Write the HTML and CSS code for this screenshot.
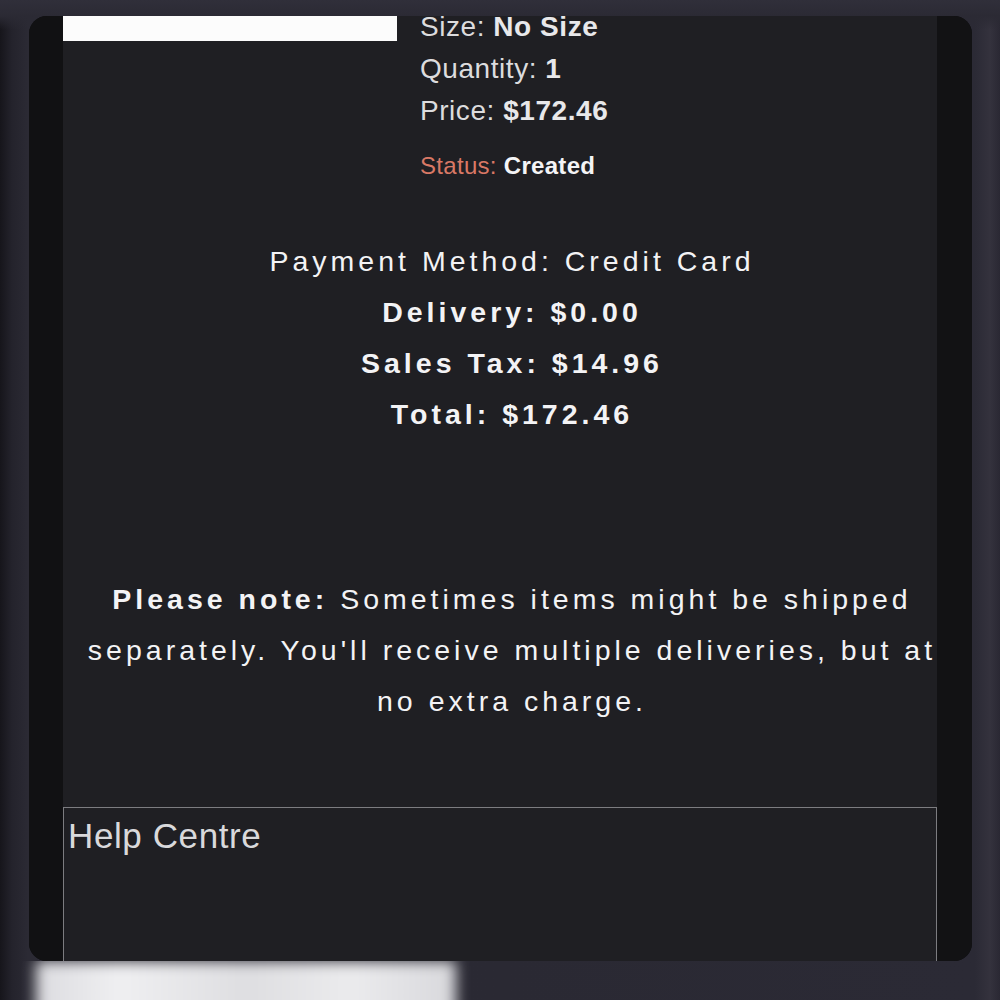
FILE: index.html
```html
<!DOCTYPE html>
<html>
<head>
<meta charset="utf-8">
<link rel="stylesheet" href="styles.css">
</head>
<body>
<div class="frame">
  <div class="card">
    <div class="strip"></div>
    <div class="panel">
      <div class="product">
        <div class="thumb"></div>
        <div class="details">
          <div class="line">Size: <b>No Size</b></div>
          <div class="line">Quantity: <b>1</b></div>
          <div class="line">Price: <b>$172.46</b></div>
          <div class="status"><span class="status-label">Status:</span> <b>Created</b></div>
        </div>
      </div>
      <div class="summary">
        <div>Payment Method: Credit Card</div>
        <div class="strong">Delivery: $0.00</div>
        <div class="strong">Sales Tax: $14.96</div>
        <div class="strong">Total: $172.46</div>
      </div>
      <p class="note"><b>Please note:</b> Sometimes items might be shipped separately. You'll receive multiple deliveries, but at no extra charge.</p>
      <div class="help">Help Centre</div>
    </div>
    <div class="strip strip-right"></div>
  </div>
  <div class="bottom">
    <div class="glow"></div>
  </div>
</div>
</body>
</html>
```
FILE: styles.css
```css
html, body {
  margin: 0;
  padding: 0;
}
body {
  width: 1000px;
  height: 1000px;
  overflow: hidden;
  background: linear-gradient(90deg, #16151b 0px, #24232c 12px, #2b2a34 28px, #2a2933 500px, #2b2a35 975px, #34323d 990px, #2a2833 1000px);
  font-family: "Liberation Sans", Arial, sans-serif;
}
.frame {
  display: flex;
  flex-direction: column;
  height: 1000px;
  padding-top: 16px;
  box-sizing: border-box;
  background: linear-gradient(180deg, #302f3a 0px, #2b2a34 16px, rgba(43,42,52,0) 30px);
}
.card {
  display: flex;
  width: 943px;
  height: 945px;
  margin-left: 29px;
  border-radius: 18px;
  overflow: hidden;
  background: #111113;
  flex: none;
}
.strip {
  width: 34px;
  flex: none;
  background: #111113;
}
.strip-right {
  width: 35px;
  background: #121214;
}
.panel {
  width: 874px;
  flex: none;
  display: flex;
  flex-direction: column;
  background: #1f1f23;
  color: #e4e4e6;
}
.product {
  display: flex;
  align-items: flex-start;
  margin-top: -10px;
}
.thumb {
  width: 334px;
  height: 35px;
  flex: none;
  background: #fcfcfc;
}
.details {
  margin-left: 23px;
  font-size: 28px;
  letter-spacing: 0.55px;
  color: #dcdcde;
}
.details .line {
  line-height: 42px;
}
.details b {
  color: #e8e8ea;
}
.status {
  margin-top: 16px;
  font-size: 24px;
  line-height: 36px;
  letter-spacing: 0.3px;
}
.status-label {
  color: #d97865;
}
.status b {
  color: #f4f4f6;
}
.summary {
  margin: 51.5px -6px 0 18px;
  text-align: center;
  font-size: 28.5px;
  line-height: 51px;
  letter-spacing: 4px;
  color: #f3f3f5;
}
.summary .strong {
  font-weight: bold;
}
.note {
  margin: 134px -6px 0 18px;
  text-align: center;
  font-size: 28.5px;
  line-height: 51px;
  letter-spacing: 4px;
  color: #f3f3f5;
}
.help {
  margin-top: 80.5px;
  flex: 1;
  border: 1px solid #7c7c80;
  border-bottom: none;
  padding: 8px 4px 0;
  font-size: 35px;
  line-height: 40px;
  letter-spacing: 0.6px;
  color: #d9d9db;
}
.bottom {
  flex: 1;
  display: flex;
  overflow: hidden;
}
.glow {
  width: 420px;
  height: 60px;
  margin-left: 36px;
  background: linear-gradient(90deg, #dcdce0 0%, #efeff1 20%, #dedee1 50%, #ebebed 75%, #d8d8dc 100%);
  filter: blur(7px);
}
```
